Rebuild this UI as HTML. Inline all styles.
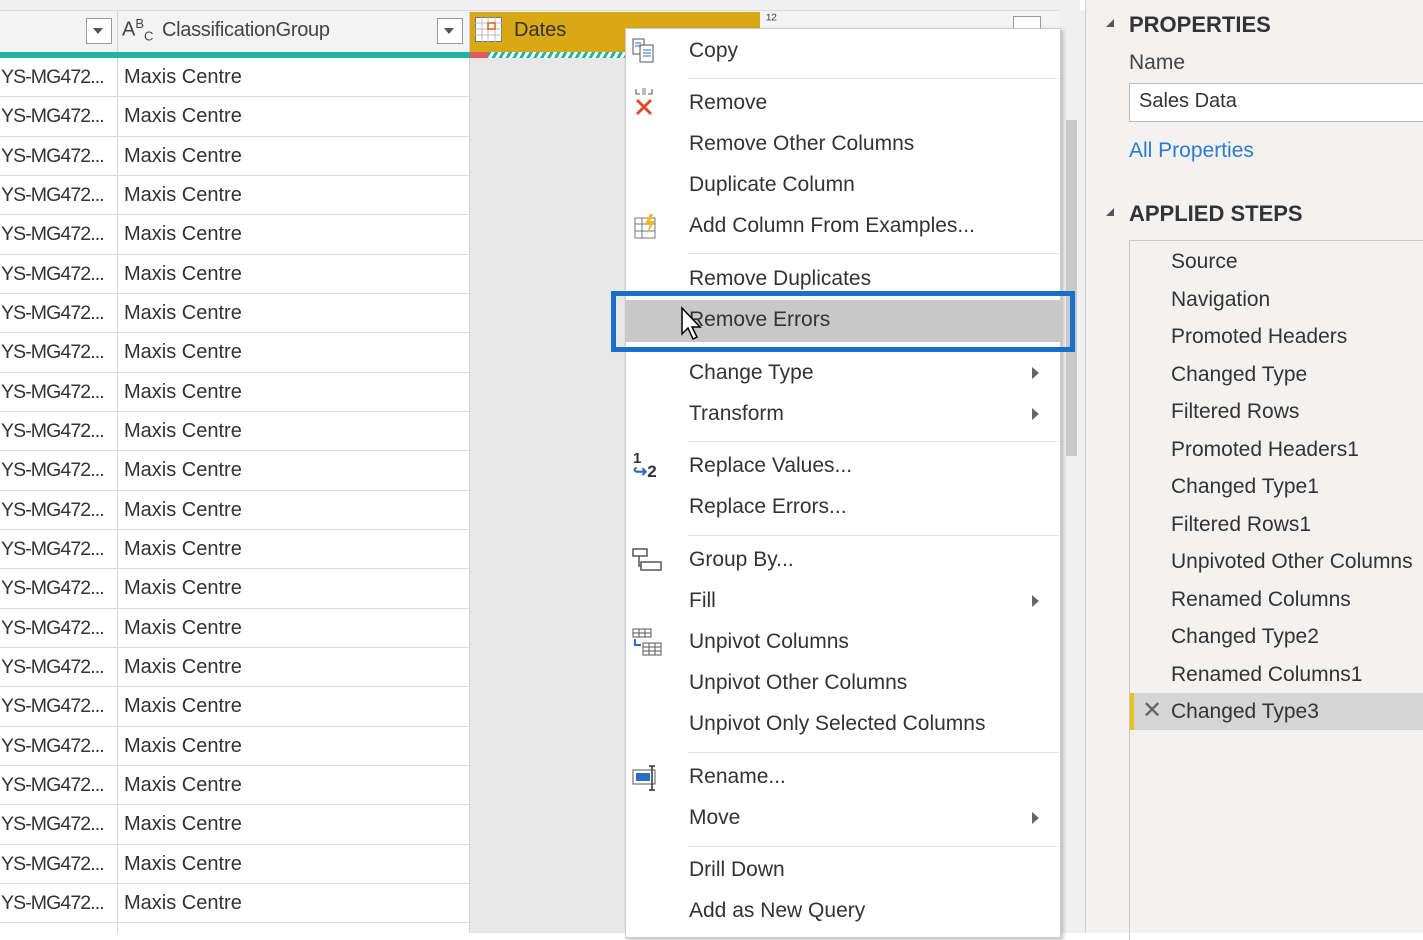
<!DOCTYPE html>
<html><head><meta charset="utf-8"><style>
*{margin:0;padding:0;box-sizing:border-box}
body{width:1423px;height:933px;overflow:hidden;background:#fff;font-family:"Liberation Sans",sans-serif;position:relative;color:#333}
.a{position:absolute}
.row{position:absolute;left:0;width:470px;height:39.33px;border-bottom:1px solid #dcdcdc;font-size:20px;line-height:39px}
.row span{position:absolute;white-space:nowrap}
.row span.c1{letter-spacing:-0.9px;font-size:19.5px}
.mi{position:absolute;left:689px;font-size:21px;color:#333;white-space:nowrap;transform:translateY(-50%)}
.sep{position:absolute;left:688px;width:370px;height:1px;background:#e3e3e3}
.arr{position:absolute;left:1032px;width:0;height:0;border-top:6px solid transparent;border-bottom:6px solid transparent;border-left:7px solid #666;transform:translateY(-50%)}
.st{position:absolute;left:1171px;font-size:21px;color:#333;transform:translateY(-50%);white-space:nowrap}
</style></head><body>
<div class="a" style="left:0;top:0;width:1080px;height:10px;background:#f0f0f0"></div>
<div class="a" style="left:0;top:10px;width:1080px;height:42px;background:#f3f3f3;border-top:1px solid #ddd"></div>
<div class="a" style="left:117px;top:10px;width:1px;height:923px;background:#d5d5d5"></div>
<div class="a" style="left:469px;top:10px;width:1px;height:923px;background:#d5d5d5"></div>
<div class="a" style="left:86px;top:18px;width:26px;height:26px;border:1px solid #999;background:#fff"></div>
<div class="a" style="left:93px;top:28px;border-left:5px solid transparent;border-right:5px solid transparent;border-top:6px solid #555"></div>
<div class="a" style="left:122px;top:16px;font-size:20px;color:#444">A<sup style="font-size:13px">B</sup><sub style="font-size:13px">C</sub></div>
<div class="a" style="left:162px;top:19px;font-size:20px;color:#444;letter-spacing:-0.3px">ClassificationGroup</div>
<div class="a" style="left:437px;top:18px;width:26px;height:26px;border:1px solid #999;background:#fff"></div>
<div class="a" style="left:444px;top:28px;border-left:5px solid transparent;border-right:5px solid transparent;border-top:6px solid #555"></div>
<div class="a" style="left:470px;top:12px;width:290px;height:40px;background:#d9a915"></div>
<svg class="a" style="left:475px;top:17px" width="28" height="26"><rect x="0.5" y="0.5" width="26" height="24" fill="#fff" stroke="#777"/><path d="M0 6h27M0 12h27M0 18h27M7 0v25M13 0v25M20 0v25" stroke="#bbb"/><rect x="13" y="6" width="7" height="6" fill="#fff" stroke="#e05a1e" stroke-width="1.5"/></svg>
<div class="a" style="left:514px;top:19px;font-size:20px;color:#333">Dates</div>
<div class="a" style="left:766px;top:12px;font-size:16px;color:#555">¹²</div>
<div class="a" style="left:1013px;top:16px;width:28px;height:14px;border:1px solid #999;background:#fff"></div>
<div class="a" style="left:0;top:52px;width:470px;height:6px;background:#1fb5a0"></div>
<div class="a" style="left:470px;top:52px;width:18px;height:6px;background:#e45a5a"></div>
<div class="a" style="left:488px;top:52px;width:140px;height:6px;background:repeating-linear-gradient(120deg,#1fb5a0 0 3px,#fff 3px 6px)"></div>
<div class="a" style="left:470px;top:58px;width:160px;height:875px;background:#e8e8e8"></div>
<div id="rows"></div>
<div class="a" style="left:1060px;top:10px;width:25px;height:923px;background:#f0f0f0"></div>
<div class="a" style="left:1066px;top:120px;width:11px;height:336px;background:#c8c8c8"></div>
<div class="a" style="left:1085px;top:0;width:338px;height:933px;background:#f3f2f1;border-left:1px solid #d0d0d0"></div>
<div class="a" style="left:1106px;top:19px;border-left:4px solid transparent;border-right:4px solid #555;border-top:4px solid transparent;border-bottom:4px solid #555"></div>
<div class="a" style="left:1129px;top:12px;font-size:22px;font-weight:bold;color:#333">PROPERTIES</div>
<div class="a" style="left:1129px;top:51px;font-size:21px;color:#444">Name</div>
<div class="a" style="left:1129px;top:83px;width:300px;height:39px;background:#fff;border:1px solid #bbb"></div>
<div class="a" style="left:1139px;top:90px;font-size:20px;color:#333">Sales Data</div>
<div class="a" style="left:1129px;top:139px;font-size:21px;color:#2b7bd0">All Properties</div>
<div class="a" style="left:1106px;top:208px;border-left:4px solid transparent;border-right:4px solid #555;border-top:4px solid transparent;border-bottom:4px solid #555"></div>
<div class="a" style="left:1129px;top:201px;font-size:22px;font-weight:bold;color:#333">APPLIED STEPS</div>
<div class="a" style="left:1129px;top:240px;width:300px;height:700px;border:1px solid #c8c8c8;border-right:none;border-bottom:none"></div>
<div class="a" style="left:1130px;top:693px;width:293px;height:37px;background:#d5d5d5"></div>
<div class="a" style="left:1130px;top:693px;width:4px;height:37px;background:#e8c21c"></div>
<div class="a" style="left:1142px;top:696px;font-size:24px;color:#666">✕</div>
<div id="steps"></div>
<div class="a" style="left:625px;top:28px;width:436px;height:910px;background:#fff;border:1px solid #ccc;box-shadow:2px 2px 4px rgba(0,0,0,.25)"></div>
<div class="a" style="left:625px;top:300px;width:438px;height:42px;background:#c8c8c8"></div>
<div class="a" style="left:611px;top:291px;width:464px;height:61px;border:5px solid #1a6fc9"></div>
<div id="menu"></div>
<svg class="a" style="left:630px;top:36px" width="34" height="30"><rect x="3" y="3" width="11" height="15" fill="#fff" stroke="#555"/><rect x="10" y="9" width="13" height="17" fill="#fff" stroke="#555"/><path d="M5 7h6M5 10h6M13 14h8M13 17h8M13 20h8" stroke="#2b6cc4"/></svg>
<svg class="a" style="left:632px;top:86px" width="30" height="32"><path d="M4 3v5h4M20 3v5h-4" stroke="#555" fill="none"/><rect x="10" y="2" width="4" height="7" fill="#bbb"/><path d="M5 14l14 14M19 14L5 28" stroke="#e04a2b" stroke-width="3"/></svg>
<svg class="a" style="left:633px;top:212px" width="28" height="28"><rect x="2" y="6" width="20" height="20" fill="#fff" stroke="#777"/><path d="M2 12h20M2 19h20M9 6v20" stroke="#777"/><path d="M17 2l-5 10h5l-3 10 8-13h-5l3-7z" fill="#f2b620"/></svg>
<div class="a" style="left:633px;top:450px;font-size:15px;color:#333;font-weight:bold">1</div>
<div class="a" style="left:633px;top:462px;font-size:17px;color:#2b6cc4;font-weight:bold">↪<span style="color:#333">2</span></div>
<svg class="a" style="left:631px;top:547px" width="32" height="26"><rect x="2" y="2" width="14" height="7" fill="#fff" stroke="#555" stroke-width="1.5"/><rect x="10" y="15" width="20" height="8" fill="#fff" stroke="#555" stroke-width="1.5"/><path d="M8 9v10h2" stroke="#555" fill="none" stroke-width="1.5"/></svg>
<svg class="a" style="left:631px;top:627px" width="32" height="32"><rect x="2" y="2" width="18" height="8" fill="#fff" stroke="#555"/><path d="M2 6h18M8 2v8M14 2v8" stroke="#555"/><rect x="12" y="16" width="18" height="12" fill="#fff" stroke="#555"/><path d="M12 20h18M12 24h18M18 16v12M24 16v12" stroke="#555"/><path d="M4 12v6h6" stroke="#2b6cc4" stroke-width="2" fill="none"/></svg>
<svg class="a" style="left:631px;top:763px" width="32" height="30"><rect x="2" y="7" width="22" height="14" fill="#fff" stroke="#555"/><rect x="5" y="10" width="14" height="8" fill="#2b6cc4"/><path d="M21 3v24M18 3h6M18 27h6" stroke="#333" stroke-width="1.5"/></svg>
<svg class="a" style="left:680px;top:306px" width="22" height="36"><path d="M2 2v26l6-6 5 11 4-2-5-10h8z" fill="#fff" stroke="#000" stroke-width="1.5"/></svg>
<script>
var r='';for(var i=0;i<22;i++){var t=58+i*39.33;r+='<div class="row" style="top:'+t+'px"><span class="c1" style="left:1px">YS-MG472...</span><span style="left:124px">Maxis Centre</span></div>'}
document.getElementById('rows').innerHTML=r;
var s=['Source','Navigation','Promoted Headers','Changed Type','Filtered Rows','Promoted Headers1','Changed Type1','Filtered Rows1','Unpivoted Other Columns','Renamed Columns','Changed Type2','Renamed Columns1','Changed Type3'];
var h='';s.forEach(function(x,i){h+='<div class="st" style="top:'+(262+i*37.5)+'px">'+x+'</div>'});document.getElementById('steps').innerHTML=h;
var m=[['Copy',51],['Remove',103],['Remove Other Columns',144],['Duplicate Column',185],['Add Column From Examples...',226],['Remove Duplicates',279],['Remove Errors',320],['Change Type',373,1],['Transform',414,1],['Replace Values...',466],['Replace Errors...',507],['Group By...',560],['Fill',601,1],['Unpivot Columns',642],['Unpivot Other Columns',683],['Unpivot Only Selected Columns',724],['Rename...',777],['Move',818,1],['Drill Down',870],['Add as New Query',911]];
var g='';m.forEach(function(x){g+='<div class="mi" style="top:'+x[1]+'px">'+x[0]+'</div>';if(x[2])g+='<div class="arr" style="top:'+x[1]+'px"></div>'});
[78,253,441,535,752,846].forEach(function(y){g+='<div class="sep" style="top:'+y+'px"></div>'});
document.getElementById('menu').innerHTML=g;
</script>
</body></html>
